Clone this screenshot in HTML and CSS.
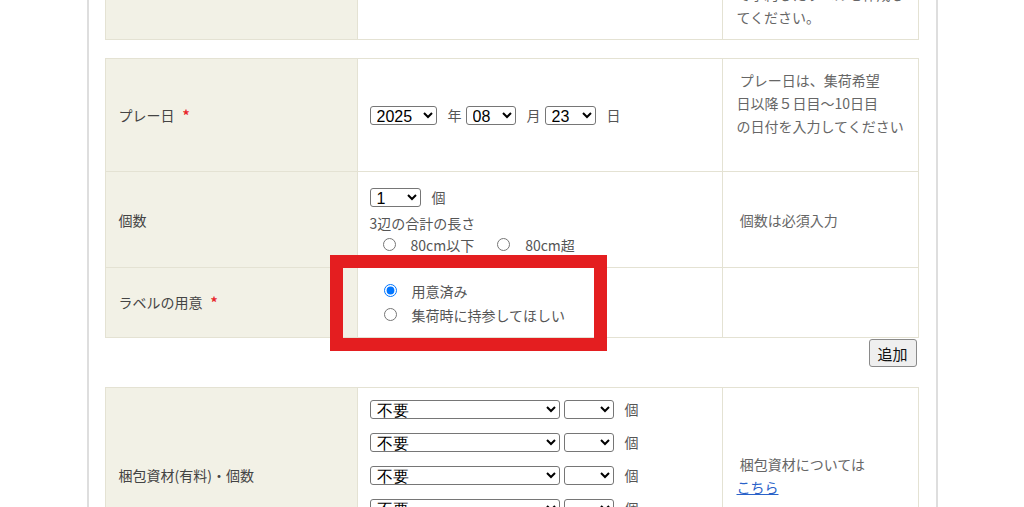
FILE: index.html
```html
<!DOCTYPE html>
<html lang="ja">

<head>
    <meta charset="UTF-8">
    <meta name="viewport" content="width=device-width, initial-scale=1.0">
    <title>ご予約フォーム</title>
    <link rel="stylesheet" href="styles.css">
</head>

<body>
    <div class="page">
        <table class="form-table">
            <tr>
                <th class="label-cell"></th>
                <td class="input-cell"></td>
                <td class="note-cell">ご希望の方は、事前にこちら<br>で予約したラベルを作成し<br>てください。</td>
            </tr>
        </table>

        <table class="form-table">
            <tr class="row-date">
                <th class="label-cell">プレー日<span class="required">*</span></th>
                <td class="input-cell">
                    <div class="inline-row">
                        <select class="sel-year"><option>2025</option></select>
                        <span class="unit">年</span>
                        <select class="sel-month"><option>08</option></select>
                        <span class="unit">月</span>
                        <select class="sel-day"><option>23</option></select>
                        <span class="unit">日</span>
                    </div>
                </td>
                <td class="note-cell">&nbsp;プレー日は、集荷希望<br>日以降５日目～10日目<br>の日付を入力してください<br>&nbsp;</td>
            </tr>
            <tr class="row-count">
                <th class="label-cell">個数</th>
                <td class="input-cell">
                    <div class="inline-row">
                        <select class="sel-count"><option>1</option></select>
                        <span class="unit">個</span>
                    </div>
                    <div class="sub-text">3辺の合計の長さ</div>
                    <div class="radio-row">
                        <label class="radio"><input type="radio" name="size">80cm以下</label>
                        <label class="radio"><input type="radio" name="size">80cm超</label>
                    </div>
                </td>
                <td class="note-cell">&nbsp;個数は必須入力</td>
            </tr>
            <tr class="row-label">
                <th class="label-cell">ラベルの用意<span class="required">*</span></th>
                <td class="input-cell highlight-cell">
                    <label class="radio block"><input type="radio" name="label" checked>用意済み</label>
                    <label class="radio block"><input type="radio" name="label">集荷時に持参してほしい</label>
                    <div class="mark-box"></div>
                </td>
                <td class="note-cell"></td>
            </tr>
        </table>

        <div class="add-row">
            <button type="button" class="add-button">追加</button>
        </div>

        <table class="form-table">
            <tr>
                <th class="label-cell">梱包資材(有料)・個数</th>
                <td class="input-cell packing">
                    <div class="pack-line"><select class="sel-item"><option>不要</option></select><select class="sel-qty"><option></option></select><span class="unit">個</span></div>
                    <div class="pack-line"><select class="sel-item"><option>不要</option></select><select class="sel-qty"><option></option></select><span class="unit">個</span></div>
                    <div class="pack-line"><select class="sel-item"><option>不要</option></select><select class="sel-qty"><option></option></select><span class="unit">個</span></div>
                    <div class="pack-line"><select class="sel-item"><option>不要</option></select><select class="sel-qty"><option></option></select><span class="unit">個</span></div>
                    <div class="pack-line"><select class="sel-item"><option>不要</option></select><select class="sel-qty"><option></option></select><span class="unit">個</span></div>
                </td>
                <td class="note-cell">&nbsp;梱包資材については<br><a href="#" class="link">こちら</a></td>
            </tr>
        </table>
    </div>
</body>

</html>
```

FILE: styles.css
```css
body {
    margin: 0;
    padding: 0;
    background: #fff;
    font-family: "Noto Sans CJK JP", "Liberation Sans", sans-serif;
    font-size: 14px;
    color: #555;
    overflow: hidden;
}

.page {
    width: 851px;
    margin: -51px auto 0;
    padding: 0 17px 0 16px;
    box-sizing: border-box;
    border-left: 2px solid #dedede;
    border-right: 2px solid #dedede;
    min-height: 700px;
}

.form-table {
    width: 814px;
    border-collapse: collapse;
    table-layout: fixed;
    margin-bottom: 18px;
}

.form-table th,
.form-table td {
    border: 1px solid #e4e2d3;
    vertical-align: middle;
    padding: 10px 14px;
    line-height: 23px;
}

.label-cell {
    width: 224px;
    background: #f2f1e6;
    text-align: left;
    font-weight: normal;
    color: #444;
    padding-left: 13px !important;
}

.input-cell {
    width: 338px;
    padding-left: 12px !important;
}

.note-cell {
    color: #666;
    padding-right: 6px !important;
    white-space: nowrap;
}

.required {
    color: #e8262b;
    margin-left: 8px;
    font-weight: bold;
}

.row-date td,
.row-date th {
    height: 91px;
}

.row-count td,
.row-count th {
    height: 75px;
    padding-top: 11px;
    padding-bottom: 9px;
}

.row-label td,
.row-label th {
    height: 49px;
}

select {
    font-family: "Liberation Sans", Arial, sans-serif;
    font-size: 16px;
    height: 19px;
    padding: 0 0 0 2px;
    border: 1px solid #767676;
    border-radius: 3px;
    background: #fff;
    color: #000;
    box-sizing: border-box;
}

.sel-year { width: 67px; }
.sel-month { width: 50px; }
.sel-day { width: 51px; }
.sel-count { width: 51px; }
.sel-item { width: 190px; }
.sel-qty { width: 50px; margin-left: 4px; }

.inline-row {
    display: flex;
    align-items: center;
}

.unit {
    margin: 0 4px 0 11px;
    color: #555;
}

.sub-text {
    margin-top: 3px;
    line-height: 22px;
}

.radio-row {
    display: flex;
    line-height: 22px;
    padding-left: 8px;
}

.radio {
    display: inline-flex;
    align-items: center;
    margin-right: 18px;
}

.radio input {
    margin: 0 15px 0 5px;
}

.radio.block {
    display: flex;
    line-height: 24px;
    padding-left: 9px;
}

.highlight-cell {
    position: relative;
}

.mark-box {
    position: absolute;
    left: -28px;
    top: -13px;
    width: 251px;
    height: 70px;
    border: 13px solid #e41e20;
}

.add-row {
    display: flex;
    justify-content: flex-end;
    margin: -17px 2px 20px 0;
}

.add-button {
    font-family: "Noto Sans CJK JP", sans-serif;
    font-size: 15px;
    color: #111;
    width: 48px;
    height: 28px;
    padding: 0;
    background: #efefef;
    border: 1px solid #8a8a8a;
    border-radius: 3px;
}

.packing {
    padding-top: 5px !important;
    padding-bottom: 5px !important;
}

.pack-line {
    display: flex;
    align-items: center;
    height: 33px;
}

.link {
    color: #2a62c9;
    text-decoration: underline;
}
```
